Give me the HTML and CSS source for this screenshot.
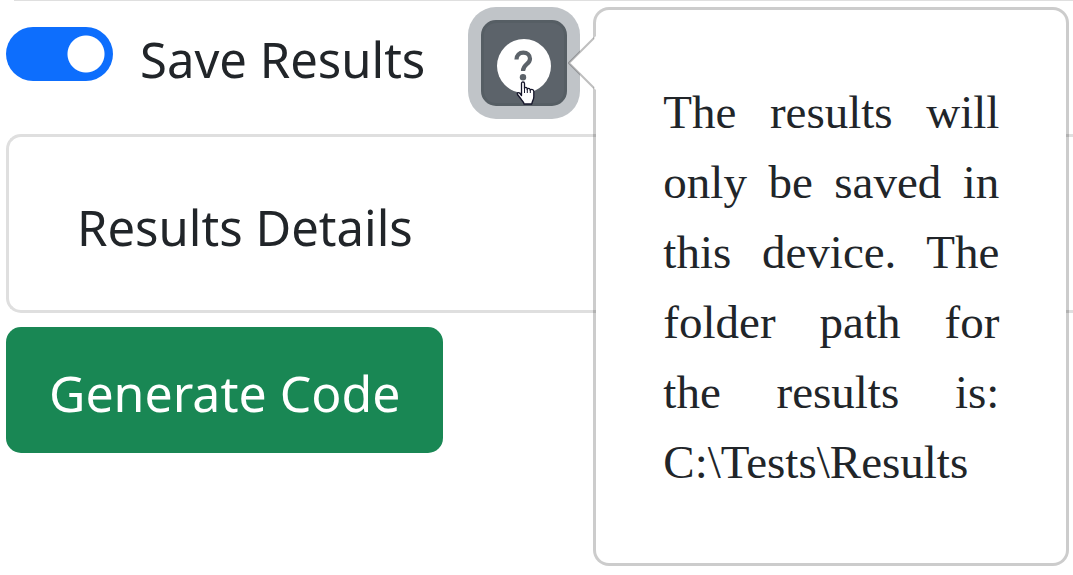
FILE: index.html
```html
<!DOCTYPE html>
<html lang="en">
<head>
<meta charset="utf-8">
<meta name="viewport" content="width=device-width, initial-scale=1">
<title>Save Results</title>
<link rel="stylesheet" href="styles.css">
</head>
<body>
<main class="panel">
  <div class="previous-card"></div>
  <div class="save-row">
    <input class="switch" type="checkbox" role="switch" id="save-results" checked>
    <label class="save-label" for="save-results">Save Results</label>
    <div class="help">
      <button class="help-button" type="button" aria-label="Help" aria-describedby="save-help">
        <svg class="help-icon" viewBox="0 0 54 54" aria-hidden="true"><circle cx="27" cy="27" r="27" fill="currentColor"/><path fill="none" stroke="#5c636a" stroke-width="4.200" d="M19.500 20.500C19.500 16 22.300 13.700 26.300 13.700S33 16 33 19.700C33 25.500 26 25 26 32"/><circle cx="26" cy="38.300" r="3.200" fill="#5c636a"/></svg>
      </button>
      <svg class="pointer" viewBox="0 0 20 24" aria-hidden="true"><path fill="#fff" stroke="#15152a" stroke-width="1.3" stroke-linejoin="round" d="M5.500 14.500V2.600Q5.500 1 7 1T8.500 2.600V7.500q0-1.200 1.300-1.200T11.200 7.600v1q0-1.200 1.400-1.200T14.200 8.800v.8q0-1.200 1.500-1.200T17.800 10V16c0 3-1.800 4-2 7H8c0-2-2-3-3-5L1.500 13.500C.7 12.200 2.300 11 3.600 12.200z"/><path fill="none" stroke="#15152a" d="M8.500 7.500V12M11.300 8.500V12M14.300 9.500V12"/></svg>
      <div class="popover" role="tooltip" id="save-help">
        <svg class="popover-arrow" viewBox="0 0 28 54" aria-hidden="true"><path fill="#fff" d="M28 0 1 27l27 27z"/><path fill="none" stroke="#000" stroke-opacity=".25" stroke-width="2" d="M26 2 1 27l25 25"/></svg>
        <p class="popover-text">The results will only be saved in this device. The folder path for the results is: C:\Tests\Results</p>
      </div>
    </div>
  </div>
  <section class="card">
    <h2 class="card-title">Results Details</h2>
  </section>
  <button class="generate" type="button">Generate Code</button>
</main>
</body>
</html>
```
FILE: styles.css
```css
* {
  box-sizing: border-box;
}

body {
  min-height: 100vh;
  margin: 0;
  background: #fff;
  color: #212529;
  font-family: "Segoe UI", "Noto Sans", sans-serif;
  font-size: 49px;
  line-height: 78px;
}

.panel {
  padding-left: 6px;
}

.previous-card {
  height: 1px;
  margin-left: 8px;
  background: #dfdfdf;
}

.save-row {
  display: flex;
  align-items: flex-start;
  padding: 19px 0 28px;
}

.switch {
  appearance: none;
  flex: none;
  width: 107px;
  height: 54px;
  margin: 7px 27px 0 0;
  border-radius: 27px;
  background: radial-gradient(circle at 80px 27px, #fff 18px, #0d6efd 19px);
}

.help {
  position: relative;
  margin-left: 56px;
}

.help-button {
  display: flex;
  justify-content: center;
  width: 86px;
  height: 86px;
  padding: 16px 0 0;
  border: 3px solid #565e64;
  border-radius: 15px;
  background: #5c636a;
  color: #fff;
  box-shadow: 0 0 0 13px #c0c4c8;
}

.help-icon {
  width: 54px;
  height: 54px;
}

.pointer {
  position: absolute;
  top: 61px;
  left: 35px;
  width: 20px;
  height: 24px;
}

.popover {
  position: absolute;
  top: -13px;
  left: calc(100% + 26px);
  width: 476px;
  padding: 67px 67px 66px;
  border: 3px solid rgba(0, 0, 0, 0.2);
  border-radius: 16px;
  background: #fff;
  background-clip: padding-box;
}

.popover-arrow {
  position: absolute;
  top: 26px;
  left: -28px;
  width: 28px;
  height: 54px;
}

.popover-text {
  margin: 0;
  font-family: "Times New Roman", "Liberation Serif", serif;
  font-size: 47px;
  line-height: 70px;
  text-align: justify;
}

.card {
  padding: 51px 68px 44px;
  border: 3px solid #dfdfdf;
  border-right: 0;
  border-radius: 15px 0 0 15px;
}

.card-title {
  margin: 0;
  font-size: 49px;
  font-weight: 400;
}

.generate {
  display: block;
  margin-top: 14px;
  padding: 27px 43px 21px;
  border: 0;
  border-radius: 15px;
  background: #198754;
  color: #fff;
  font: inherit;
  font-size: 50px;
}
```
